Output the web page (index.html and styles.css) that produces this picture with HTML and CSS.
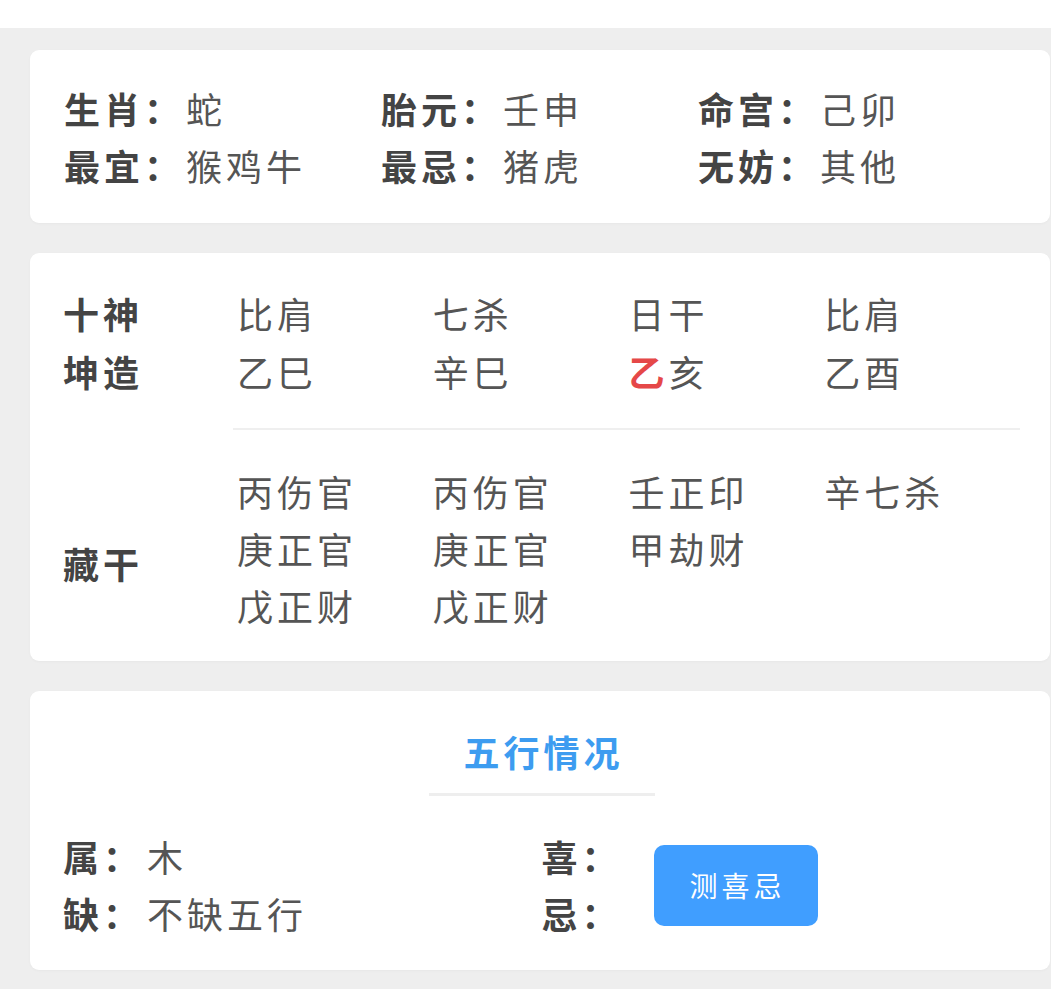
FILE: index.html
```html
<!DOCTYPE html>
<html lang="zh-CN">
<head>
<meta charset="utf-8">
<title>八字</title>
<link rel="stylesheet" href="styles.css">
</head>
<body>
<div class="topbar"></div>
<main class="page">
  <section class="card info">
    <div class="pair"><span class="lbl">生肖：</span><span class="val">蛇</span></div>
    <div class="pair"><span class="lbl">胎元：</span><span class="val">壬申</span></div>
    <div class="pair"><span class="lbl">命宫：</span><span class="val">己卯</span></div>
    <div class="pair"><span class="lbl">最宜：</span><span class="val">猴鸡牛</span></div>
    <div class="pair"><span class="lbl">最忌：</span><span class="val">猪虎</span></div>
    <div class="pair"><span class="lbl">无妨：</span><span class="val">其他</span></div>
  </section>

  <section class="card pillars">
    <div class="lbl">十神</div>
    <div class="val">比肩</div>
    <div class="val">七杀</div>
    <div class="val">日干</div>
    <div class="val">比肩</div>

    <div class="lbl">坤造</div>
    <div class="val">乙巳</div>
    <div class="val">辛巳</div>
    <div class="val"><span class="red">乙</span>亥</div>
    <div class="val">乙酉</div>

    <div class="divider"></div>

    <div class="lbl hidden-lbl">藏干</div>
    <div class="val stack"><span>丙伤官</span><span>庚正官</span><span>戊正财</span></div>
    <div class="val stack"><span>丙伤官</span><span>庚正官</span><span>戊正财</span></div>
    <div class="val stack"><span>壬正印</span><span>甲劫财</span></div>
    <div class="val stack"><span>辛七杀</span></div>
  </section>

  <section class="card wuxing">
    <h2 class="title">五行情况</h2>
    <div class="title-line"></div>
    <div class="wx-body">
      <div class="wx-col">
        <div class="pair"><span class="lbl short">属：</span><span class="val">木</span></div>
        <div class="pair"><span class="lbl short">缺：</span><span class="val">不缺五行</span></div>
      </div>
      <div class="wx-col wx-right">
        <div class="wx-labels">
          <div class="lbl">喜：</div>
          <div class="lbl">忌：</div>
        </div>
        <button class="btn">测喜忌</button>
      </div>
    </div>
  </section>
</main>
</body>
</html>
```

FILE: styles.css
```css
* { box-sizing: border-box; }

html, body {
  margin: 0;
  padding: 0;
  background: #eeeeee;
  font-family: "Noto Sans CJK SC", "Noto Sans", sans-serif;
  font-size: 36px;
  letter-spacing: 4px;
}

.topbar {
  height: 28px;
  background: #ffffff;
}

.page {
  padding: 22px 1px 19px 30px;
  display: flex;
  flex-direction: column;
  gap: 30px;
}

.card {
  background: #ffffff;
  border-radius: 9px;
  box-shadow: 0 1px 3px rgba(0, 0, 0, 0.03);
}

.lbl {
  color: #444444;
  font-weight: 700;
  line-height: 57px;
  white-space: nowrap;
}

.val {
  color: #555555;
  font-weight: 400;
  line-height: 57px;
  white-space: nowrap;
}

.red { color: #e54848; font-weight: 700; }

/* card 1 */
.info {
  padding: 30px 35px 29px 34px;
  display: grid;
  grid-template-columns: repeat(3, 1fr);
}
.info .pair { display: flex; }
.info .val { margin-left: 2px; }

/* card 2 */
.pillars {
  padding: 31px 30px 27px 33px;
  display: grid;
  grid-template-columns: 174px repeat(4, 1fr);
}
.pillars .lbl,
.pillars .val { line-height: 58px; }
.pillars .divider {
  grid-column: 2 / 6;
  height: 2px;
  background: #efefef;
  margin: 28px 0 33px -4px;
}
.pillars .stack {
  display: flex;
  flex-direction: column;
}
.pillars .stack span { line-height: 57px; }
.pillars .hidden-lbl {
  align-self: center;
  padding-top: 28px;
}

/* card 3 */
.wuxing {
  padding: 32px 30px 28px 33px;
  display: flex;
  flex-direction: column;
  align-items: center;
}
.title {
  margin: 0;
  font-size: 36px;
  font-weight: 700;
  color: #3d9cf0;
  line-height: 57px;
  letter-spacing: 4px;
  padding-left: 4px;
}
.title-line {
  width: 226px;
  height: 3px;
  background: #eeeeee;
  margin-top: 13px;
  margin-left: 0;
}
.wx-body {
  align-self: stretch;
  margin-top: 32px;
  display: grid;
  grid-template-columns: 1fr 1fr;
}
.wx-col .pair { display: flex; }
.wx-col .val { margin-left: 4px; }
.wx-right {
  display: flex;
  align-items: center;
}
.btn {
  margin-left: 32px;
  width: 164px;
  height: 81px;
  border: none;
  border-radius: 10px;
  background: #409eff;
  color: #ffffff;
  font-family: "Noto Sans CJK SC", "Noto Sans", sans-serif;
  font-size: 28px;
  letter-spacing: 4px;
  padding: 0 0 0 4px;
}
```
